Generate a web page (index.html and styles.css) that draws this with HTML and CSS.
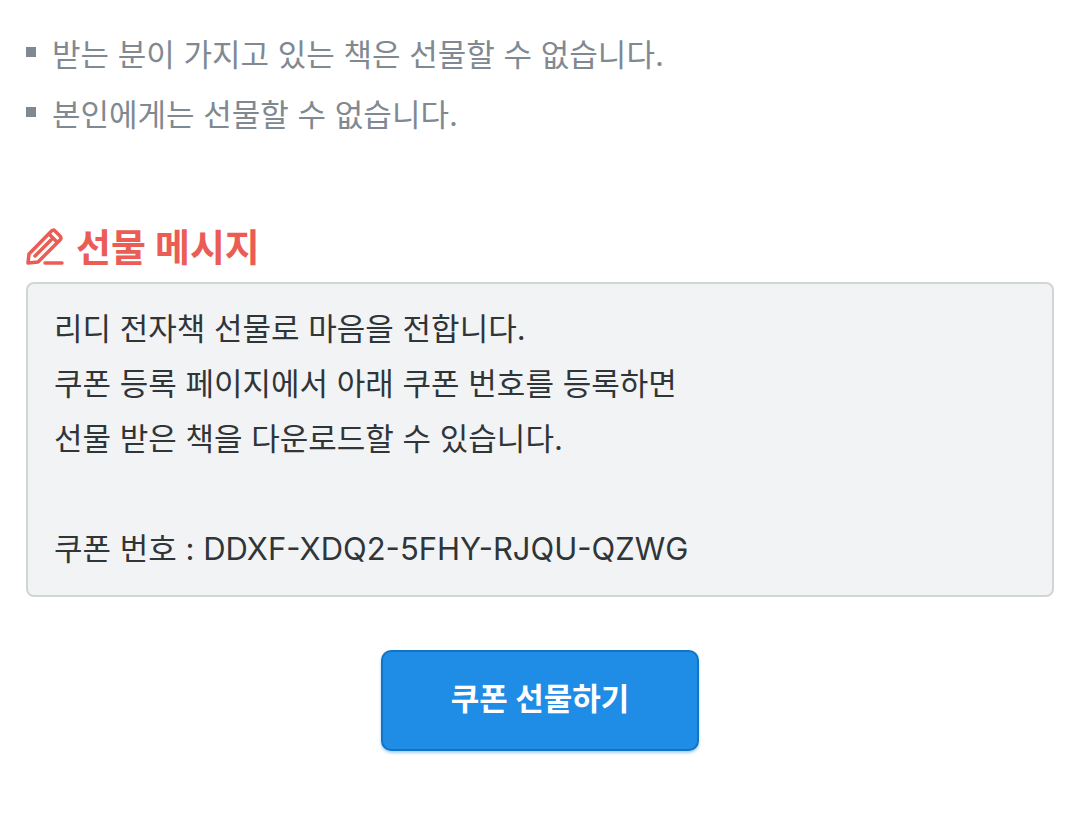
FILE: index.html
```
<!DOCTYPE html>
<html lang="ko">
    <head>
        <meta charset="utf-8">
        <meta name="viewport" content="width=device-width, initial-scale=1">
        <title>선물 메시지</title>
        <link rel="stylesheet" href="styles.css">
    </head>
    <body>
        <main>
            <ul class="notice">
                <li>받는 분이 가지고 있는 책은 선물할 수 없습니다.</li>
                <li>본인에게는 선물할 수 없습니다.</li>
            </ul>
            <form class="gift">
                <h2 class="gift-title">
                    <svg class="pencil" viewBox="0 0 38 38" aria-hidden="true">
                        <path d="M2 35 3 26 25 3.500Q27 1 29 3L34 8Q36 10 34 12L12 34Z"/>
                        <path d="M23 6 31 14M9 28 25 12"/>
                        <path d="M19 35H36"/>
                    </svg>
                    <label for="message">선물 메시지</label>
                </h2>
                <textarea id="message" class="message" rows="5" readonly>리디 전자책 선물로 마음을 전합니다.
쿠폰 등록 페이지에서 아래 쿠폰 번호를 등록하면
선물 받은 책을 다운로드할 수 있습니다.

쿠폰 번호 : DDXF-XDQ2-5FHY-RJQU-QZWG</textarea>
                <button type="button" class="gift-button">쿠폰 선물하기</button>
            </form>
        </main>
    </body>
</html>
```
FILE: styles.css
```
*{
    box-sizing: border-box;
}
body{
    margin: 0;
    padding: 25px 26px;
    background: #fff;
    font-family: Inter, "Noto Sans CJK KR", sans-serif;
    font-size: 31px;
}
.notice{
    list-style: none;
    margin: 0;
    padding: 0;
    color: #808991;
    line-height: 60px;
}
.notice li{
    display: flex;
    align-items: center;
    gap: 16px;
}
.notice li::before{
    content: "";
    width: 10px;
    height: 10px;
    margin-bottom: 6px;
    background: #808991;
}
.gift{
    display: flex;
    flex-direction: column;
    margin-top: 74px;
}
.gift-title{
    display: flex;
    align-items: center;
    gap: 12px;
    margin: 0;
    color: #eb5c55;
    font-size: 38px;
    font-weight: 700;
    line-height: 56px;
}
.pencil{
    width: 38px;
    height: 38px;
    fill: none;
    stroke: currentColor;
    stroke-width: 3.5;
    stroke-linecap: round;
    stroke-linejoin: round;
}
.message{
    display: block;
    width: 100%;
    margin: 7px 0 0;
    padding: 17px 26px 19px;
    border: 2px solid #d1d5d6;
    border-radius: 8px;
    background: #f2f3f5;
    color: #303538;
    font: inherit;
    line-height: 55px;
    resize: none;
    overflow: hidden;
    outline: none;
}
.gift-button{
    align-self: center;
    margin-top: 53px;
    padding: 19px 68px 22px;
    border: 2px solid #1274c4;
    border-radius: 10px;
    background: #1f8ce6;
    box-shadow: 0 2px 3px rgba(31, 140, 230, .4);
    color: #fff;
    font: inherit;
    font-weight: 700;
    line-height: 56px;
    cursor: pointer;
}
```
